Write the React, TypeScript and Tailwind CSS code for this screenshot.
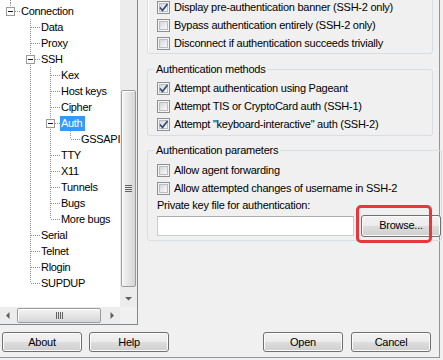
import type { ReactNode } from "react";

type TreeNode = { label: string; children?: TreeNode[]; selected?: boolean };

type Row = {
  label: string;
  depth: number;
  guides: boolean[];
  last: boolean;
  open: boolean;
  selected: boolean;
};

const tree: TreeNode[] = [
  {
    label: "Connection",
    children: [
      { label: "Data" },
      { label: "Proxy" },
      {
        label: "SSH",
        children: [
          { label: "Kex" },
          { label: "Host keys" },
          { label: "Cipher" },
          { label: "Auth", selected: true, children: [{ label: "GSSAPI" }] },
          { label: "TTY" },
          { label: "X11" },
          { label: "Tunnels" },
          { label: "Bugs" },
          { label: "More bugs" },
        ],
      },
      { label: "Serial" },
      { label: "Telnet" },
      { label: "Rlogin" },
      { label: "SUPDUP" },
    ],
  },
];

function flatten(nodes: TreeNode[], depth = 0, guides: boolean[] = []): Row[] {
  return nodes.flatMap((node, i) => {
    const last = i === nodes.length - 1;
    const row: Row = {
      label: node.label,
      depth,
      guides,
      last,
      open: !!node.children,
      selected: !!node.selected,
    };
    const kids = node.children ? flatten(node.children, depth + 1, [...guides, !last]) : [];
    return [row, ...kids];
  });
}

const rows = flatten(tree);

const dot = "#8f8f8f";

function Guide({ on }: { on: boolean }) {
  return (
    <svg width="20" height="16" className="shrink-0">
      {on && <line x1="10.5" y1="0" x2="10.5" y2="16" stroke={dot} strokeDasharray="1 1" />}
    </svg>
  );
}

function Connector({ last, open }: { last: boolean; open: boolean }) {
  return (
    <svg width="20" height="16" className="shrink-0">
      <line x1="10.5" y1="0" x2="10.5" y2={last ? 8 : 16} stroke={dot} strokeDasharray="1 1" />
      <line x1={open ? 15 : 11} y1="8.5" x2="20" y2="8.5" stroke={dot} strokeDasharray="1 1" />
      {open && (
        <>
          <rect x="6.5" y="4.5" width="8" height="8" fill="#fdfdfd" stroke="#9a9a9a" />
          <line x1="8" y1="8.5" x2="13" y2="8.5" stroke="#1a1a1a" />
        </>
      )}
    </svg>
  );
}

function TreeRow({ row }: { row: Row }) {
  return (
    <div className="flex h-[16px] items-center">
      {row.guides.map((on, i) => (
        <Guide key={i} on={on} />
      ))}
      <Connector last={row.last} open={row.open} />
      <span
        className={`h-[15px] whitespace-nowrap pl-[1px] pr-[3px] leading-[15px] tracking-[-0.3px] ${
          row.selected ? "bg-[#3399ff] text-white" : "text-black"
        }`}
      >
        {row.label}
      </span>
    </div>
  );
}

function Arrow({ dir }: { dir: "down" | "left" | "right" }) {
  const points = {
    down: "5,7 12,7 8.5,10.5",
    left: "9.5,5 9.5,12 6,8.5",
    right: "7.5,5 7.5,12 11,8.5",
  }[dir];
  return (
    <svg width="17" height="17" className="shrink-0">
      <polygon points={points} fill="#5f5f5f" />
    </svg>
  );
}

function VScroll() {
  return (
    <div className="flex w-[17px] flex-col bg-[#ececec]">
      <div className="flex flex-1 flex-col px-[1px] pb-[3px] pt-[90px]">
        <div className="flex flex-1 flex-col items-center justify-center gap-[1px] rounded-[2px] border border-[#9b9b9b] bg-gradient-to-r from-[#f4f4f4] to-[#d6d6d6] shadow-[inset_1px_1px_0_#fff]">
          <div className="h-px w-[7px] bg-[#616161]" />
          <div className="h-px w-[7px] bg-[#616161]" />
          <div className="h-px w-[7px] bg-[#616161]" />
          <div className="h-px w-[7px] bg-[#616161]" />
        </div>
      </div>
      <Arrow dir="down" />
    </div>
  );
}

function HScroll() {
  return (
    <div className="flex h-[17px]">
      <div className="flex w-[120px] bg-[#ececec]">
        <Arrow dir="left" />
        <div className="flex w-[84px] py-[1px]">
          <div className="flex flex-1 items-center justify-center gap-[1px] rounded-[2px] border border-[#9b9b9b] bg-gradient-to-b from-[#f4f4f4] to-[#d6d6d6] shadow-[inset_1px_1px_0_#fff]">
            <div className="h-[7px] w-px bg-[#616161]" />
            <div className="h-[7px] w-px bg-[#616161]" />
            <div className="h-[7px] w-px bg-[#616161]" />
            <div className="h-[7px] w-px bg-[#616161]" />
          </div>
        </div>
        <div className="flex-1" />
        <Arrow dir="right" />
      </div>
      <div className="w-[17px] bg-[#f0f0f0]" />
    </div>
  );
}

function CheckBox({ checked }: { checked?: boolean }) {
  return (
    <span className="grid h-[13px] w-[13px] shrink-0 place-items-center border border-[#8e8f8f] bg-[#f4f4f4]">
      <span className="col-start-1 row-start-1 h-[9px] w-[9px] border border-[#b9bcc1] bg-gradient-to-br from-[#d3d6db] to-[#fafafa]" />
      {checked && (
        <svg width="11" height="11" className="col-start-1 row-start-1">
          <path d="M2 5.5 L4.5 8.5 L9.5 2" fill="none" stroke="#34457a" strokeWidth="1.7" />
        </svg>
      )}
    </span>
  );
}

function Option({ checked, children }: { checked?: boolean; children: ReactNode }) {
  return (
    <div className="flex h-[18px] items-center gap-[4px] whitespace-nowrap">
      <CheckBox checked={checked} />
      <span>{children}</span>
    </div>
  );
}

const button =
  "flex h-[20px] w-[80px] items-center justify-center rounded-[3px] border border-[#707070] bg-[linear-gradient(#f2f2f2_0%,#ebebeb_50%,#dddddd_50%,#cfcfcf_100%)] text-black shadow-[inset_0_0_0_1px_#fbfbfb]";

export default function App() {
  return (
    <div className="relative h-[360px] w-[443px] overflow-hidden bg-[#f0f0f0] font-['Liberation_Sans',Arial,sans-serif] text-[11px] tracking-[-0.25px] text-black">
      <div className="flex h-[358px] w-[440px] flex-col border-b border-r border-[#8d97a3]">
        <div className="flex h-[325px]">
          <div className="flex w-[138px] flex-col border-b border-r border-[#828790] bg-white">
            <div className="flex h-[307px]">
              <div className="w-[120px] overflow-hidden">
                {/* the list is scrolled: the line from the sibling above still shows */}
                <svg width="20" height="3" className="block">
                  <line x1="10.5" y1="0" x2="10.5" y2="3" stroke={dot} strokeDasharray="1 1" />
                </svg>
                <div className="flex flex-col">
                  {rows.map((row) => (
                    <TreeRow key={row.label} row={row} />
                  ))}
                </div>
              </div>
              <VScroll />
            </div>
            <HScroll />
          </div>

          <div className="ml-[9px] flex w-[286px] flex-col">
            <div className="-mt-[12px] rounded-[3px] border border-[#d5dfe5] pb-[1px] pl-[9px] pt-[9px] shadow-[inset_1px_1px_0_#fff]">
              <Option checked>Display pre-authentication banner (SSH-2 only)</Option>
              <Option>Bypass authentication entirely (SSH-2 only)</Option>
              <Option>Disconnect if authentication succeeds trivially</Option>
            </div>

            <fieldset className="mt-[8px] rounded-[3px] border border-[#d5dfe5]">
              <legend className="ml-[6px] px-[2px] leading-[14px]">Authentication methods</legend>
              <div className="pb-[2px] pl-[9px] pt-[3px]">
                <Option checked>Attempt authentication using Pageant</Option>
                <Option>Attempt TIS or CryptoCard auth (SSH-1)</Option>
                <Option checked>Attempt "keyboard-interactive" auth (SSH-2)</Option>
              </div>
            </fieldset>

            <fieldset className="mt-[7px] rounded-[3px] border border-[#d5dfe5]">
              <legend className="ml-[6px] px-[2px] leading-[14px]">Authentication parameters</legend>
              <div className="pb-[3px] pl-[9px] pt-[4px]">
                <Option>Allow agent forwarding</Option>
                <Option>Allow attempted changes of username in SSH-2</Option>
                <div className="h-[16px] leading-[16px]">Private key file for authentication:</div>
                <div className="mt-[1px] flex h-[23px] items-center">
                  <input
                    readOnly
                    className="h-[20px] w-[197px] border border-[#c9ccd2] border-t-[#abadb3] bg-white outline-none"
                  />
                  <button className={`${button} ml-[7px] h-[22px] w-[60px]`}>Browse...</button>
                </div>
              </div>
            </fieldset>
          </div>
        </div>

        <div className="mt-[7px] flex pl-[2px] pr-[8px]">
          <button className={button}>About</button>
          <button className={`${button} ml-[7px]`}>Help</button>
          <button
            className={`${button} ml-auto border-[#3c7fb1] bg-[linear-gradient(#eaf6fd_0%,#d9f0fc_50%,#bee6fd_50%,#a7d9f5_100%)]`}
          >
            Open
          </button>
          <button className={`${button} ml-[8px]`}>Cancel</button>
        </div>
      </div>

      <div className="absolute left-[356px] top-[205px] h-[38px] w-[76px] rounded-[5px] border-[3px] border-[#e8373c]" />
    </div>
  );
}
